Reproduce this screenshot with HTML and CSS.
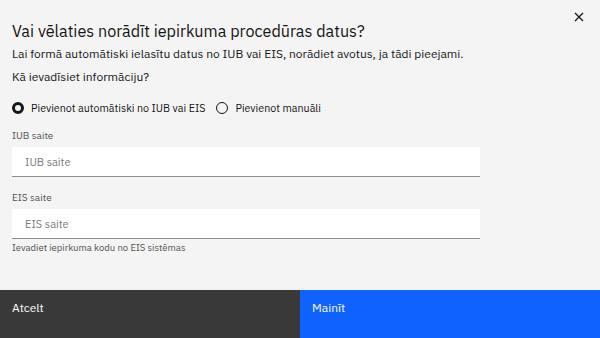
FILE: index.html
```html
<!DOCTYPE html>
<html lang="lv">
<head>
    <meta charset="UTF-8">
    <meta name="viewport" content="width=device-width, initial-scale=1.0">
    <title>Iepirkuma procedūras dati</title>
    <link rel="stylesheet" href="styles.css">
</head>
<body>
    <div class="modal">
        <button class="close" aria-label="Aizvērt">
            <svg width="10" height="10" viewBox="0 0 10 10">
                <path d="M1 1L9 9M9 1L1 9" stroke="#161616" stroke-width="1.3"/>
            </svg>
        </button>

        <div class="content">
            <h1 class="title">Vai vēlaties norādīt iepirkuma procedūras datus?</h1>
            <p class="text">Lai formā automātiski ielasītu datus no IUB vai EIS, norādiet avotus, ja tādi pieejami.</p>
            <p class="text">Kā ievadīsiet informāciju?</p>

            <div class="radios">
                <label class="radio">
                    <input type="radio" name="mode" checked>
                    <span class="dot"></span>
                    Pievienot automātiski no IUB vai EIS
                </label>
                <label class="radio">
                    <input type="radio" name="mode">
                    <span class="dot"></span>
                    Pievienot manuāli
                </label>
            </div>

            <div class="field">
                <label class="field-label">IUB saite</label>
                <input class="input" type="text" placeholder="IUB saite">
            </div>

            <div class="field">
                <label class="field-label">EIS saite</label>
                <input class="input" type="text" placeholder="EIS saite">
                <div class="helper">Ievadiet iepirkuma kodu no EIS sistēmas</div>
            </div>
        </div>

        <div class="footer">
            <button class="btn btn-secondary">Atcelt</button>
            <button class="btn btn-primary">Mainīt</button>
        </div>
    </div>
</body>
</html>
```

FILE: styles.css
```css
* {
    box-sizing: border-box;
}
body {
    margin: 0;
    font-family: "IBM Plex Sans", "Noto Sans", Arial, sans-serif;
    color: #161616;
    background: #f4f4f4;
}
.modal {
    position: relative;
    width: 600px;
    height: 338px;
    display: flex;
    flex-direction: column;
    background: #f4f4f4;
}
.close {
    position: absolute;
    top: 12px;
    right: 16px;
    width: 10px;
    height: 10px;
    padding: 0;
    border: 0;
    background: none;
    display: flex;
}
.content {
    flex: 1;
    padding: 21px 120px 0 12px;
}
.title {
    margin: 0 0 4px;
    font-size: 16.2px;
    font-weight: 400;
    line-height: 20px;
}
.text {
    margin: 0 0 6px;
    font-size: 12px;
    line-height: 17px;
}
.radios {
    display: flex;
    gap: 11px;
    margin: 15px 0 14px;
}
.radio {
    display: flex;
    align-items: center;
    gap: 7px;
    font-size: 10.7px;
    line-height: 16px;
}
.radio input {
    display: none;
}
.dot {
    width: 12px;
    height: 12px;
    border: 1px solid #161616;
    border-radius: 50%;
}
.radio input:checked + .dot {
    border: 3.5px solid #161616;
}
.field {
    margin-bottom: 15px;
}
.field-label {
    display: block;
    font-size: 10px;
    line-height: 12px;
    color: #525252;
    margin-bottom: 5px;
}
.input {
    display: block;
    width: 468px;
    height: 30px;
    padding: 0 13px;
    border: 0;
    border-bottom: 1px solid #8d8d8d;
    background: #fff;
    font-family: inherit;
    font-size: 11px;
    color: #161616;
}
.input::placeholder {
    color: #7a7a7a;
}
.helper {
    margin-top: 3px;
    font-size: 9.5px;
    line-height: 12px;
    color: #525252;
}
.footer {
    display: flex;
    height: 48px;
}
.btn {
    flex: 1;
    border: 0;
    padding: 10px 12px;
    text-align: left;
    display: flex;
    align-items: flex-start;
    font-family: inherit;
    font-size: 12px;
    color: #fff;
}
.btn-secondary {
    background: #393939;
}
.btn-primary {
    background: #0f62fe;
}
```
